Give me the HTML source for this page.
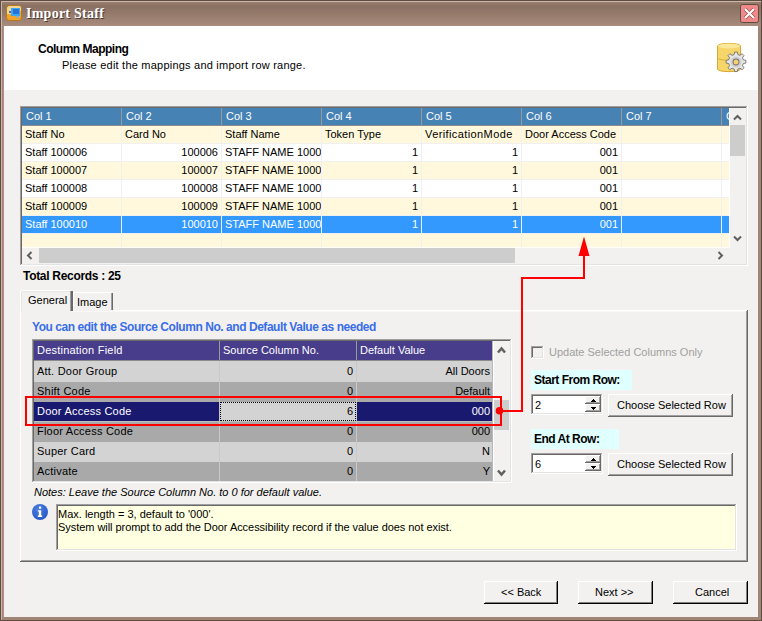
<!DOCTYPE html>
<html><head><meta charset="utf-8">
<style>
*{box-sizing:border-box;margin:0;padding:0}
html,body{width:762px;height:621px;overflow:hidden;background:#f2f1ef}
body{position:relative;font-family:"Liberation Sans",sans-serif;font-size:11px;color:#000}
.a{position:absolute}
.t{position:absolute;white-space:pre;line-height:13px}
.b{font-weight:bold}
.clip{position:absolute;overflow:hidden}
</style></head><body>
<div class="a" style="left:0px;top:0px;width:762px;height:621px;background:#a08476;"></div>
<div class="a" style="left:0px;top:0px;width:762px;height:26px;background:linear-gradient(#98806f 0px,#98806f 2px,#8a7062 6px,#a4887a 24px,#ae8c7e 26px);"></div>
<div class="a" style="left:0px;top:0px;width:1px;height:621px;background:#5e4b42;"></div>
<div class="a" style="left:761px;top:0px;width:1px;height:621px;background:#5e4b42;"></div>
<div class="a" style="left:0px;top:0px;width:762px;height:1px;background:#5e4b42;"></div>
<div class="a" style="left:0px;top:620px;width:762px;height:1px;background:#5e4b42;"></div>
<div class="a" style="left:1px;top:1px;width:1px;height:619px;background:#cdb5a8;"></div>
<div class="a" style="left:1px;top:1px;width:760px;height:1px;background:#cdb5a8;"></div>
<div class="a" style="left:3px;top:26px;width:1px;height:591px;background:#b88c88;"></div>
<svg class="a" style="left:6px;top:5px" width="16" height="16" viewBox="0 0 16 16">
<rect x="0.5" y="0.5" width="15" height="15" rx="3" fill="#f3a22a" stroke="#b87818"/>
<path d="M1 4 Q1 1 4 1 L12 1 Q15 1 15 3 L15 6 L8 9 L1 9 Z" fill="#eed79a"/>
<rect x="5" y="3" width="9" height="8" fill="#38a8f0"/>
<rect x="7" y="4" width="6" height="5" fill="#2a70d8"/>
<rect x="3" y="6" width="2" height="2" fill="#5a6a8a"/>
<rect x="10" y="11" width="3" height="2" fill="#8ab0c8"/>
</svg>
<div class="t" style="left:27px;top:7px;font-family:Liberation Serif;letter-spacing:0.25px;font-size:14px;line-height:16px;color:#4a3a32;font-weight:bold">Import Staff</div>
<div class="t" style="left:26px;top:6px;font-family:Liberation Serif;letter-spacing:0.25px;font-size:14px;line-height:16px;color:#fff;font-weight:bold">Import Staff</div>
<svg class="a" style="left:740px;top:4px" width="19" height="19" viewBox="0 0 19 19">
<rect x="0.5" y="0.5" width="18" height="18" rx="2" fill="#f08a8a" stroke="#5e4b42"/>
<path d="M5 5 L14 14 M14 5 L5 14" stroke="#a04848" stroke-width="3.6"/>
<path d="M5 5 L14 14 M14 5 L5 14" stroke="#fff" stroke-width="2.2"/>
</svg>
<div class="a" style="left:4px;top:26px;width:754px;height:591px;background:#f2f1ef;"></div>
<div class="a" style="left:4px;top:26px;width:754px;height:64px;background:#fff;"></div>
<div class="t" style="left:38px;top:43px;font-weight:bold;font-size:12px;letter-spacing:-0.5px">Column Mapping</div>
<div class="t" style="left:62px;top:59px;letter-spacing:0.22px">Please edit the mappings and import row range.</div>
<svg class="a" style="left:716px;top:42px" width="32" height="32" viewBox="0 0 32 32">
<path d="M1.5 4 C1.5 0.5 24.5 0.5 24.5 4 L24.5 27 C24.5 30.5 1.5 30.5 1.5 27 Z" fill="#f6d66a" stroke="#d8a830"/>
<path d="M1.5 16 C1.5 19 24.5 19 24.5 16" fill="none" stroke="#e0b040"/>
<ellipse cx="13" cy="4" rx="11" ry="2.6" fill="#fbe89a"/>
<g transform="translate(20,20)">
<path d="M-1.6 -10 L1.6 -10 L2.2 -7 L4.6 -6 L7.2 -8 L9.4 -5.8 L7.6 -3.2 L8.6 -0.8 L11.6 -0.2 L11.6 3 L8.6 3.6 L7.6 6 L9.4 8.6 L7.2 10.8 L4.6 9 L2.2 10 L1.6 13 L-1.6 13 L-2.2 10 L-4.6 9 L-7.2 10.8 L-9.4 8.6 L-7.6 6 L-8.6 3.6 L-11.6 3 L-11.6 -0.2 L-8.6 -0.8 L-7.6 -3.2 L-9.4 -5.8 L-7.2 -8 L-4.6 -6 L-2.2 -7 Z" transform="translate(0,-1.5) scale(0.85)" fill="#e6e6e6" stroke="#6a6a6a" stroke-width="1"/>
<circle cx="0" cy="0" r="5.5" fill="#d0d0d0"/>
<circle cx="0" cy="0" r="3.4" fill="#707070"/>
<circle cx="0" cy="0" r="2.5" fill="#f3d070"/>
</g>
</svg>
<div class="a" style="left:20px;top:106px;width:728px;height:1px;background:#a0a0a0;"></div>
<div class="a" style="left:20px;top:106px;width:1px;height:160px;background:#a0a0a0;"></div>
<div class="a" style="left:21px;top:107px;width:726px;height:1px;background:#696969;"></div>
<div class="a" style="left:21px;top:107px;width:1px;height:158px;background:#696969;"></div>
<div class="a" style="left:20px;top:265px;width:728px;height:1px;background:#ffffff;"></div>
<div class="a" style="left:747px;top:106px;width:1px;height:160px;background:#ffffff;"></div>
<div class="a" style="left:21px;top:264px;width:726px;height:1px;background:#e3e3e3;"></div>
<div class="a" style="left:746px;top:107px;width:1px;height:158px;background:#e3e3e3;"></div>
<div class="a" style="left:22px;top:108px;width:724px;height:156px;background:#f2f1ef;"></div>
<div class="a" style="left:22px;top:108px;width:707px;height:17px;background:#4682b4;"></div>
<div class="a" style="left:22px;top:125px;width:707px;height:1px;background:#8c8c8c;"></div>
<div class="clip" style="left:22px;top:108px;width:99px;height:17px"><div class="t" style="left:4px;top:2px;color:#fff">Col 1</div></div>
<div class="clip" style="left:122px;top:108px;width:99px;height:17px"><div class="t" style="left:4px;top:2px;color:#fff">Col 2</div></div>
<div class="clip" style="left:222px;top:108px;width:99px;height:17px"><div class="t" style="left:4px;top:2px;color:#fff">Col 3</div></div>
<div class="clip" style="left:322px;top:108px;width:99px;height:17px"><div class="t" style="left:4px;top:2px;color:#fff">Col 4</div></div>
<div class="clip" style="left:422px;top:108px;width:99px;height:17px"><div class="t" style="left:4px;top:2px;color:#fff">Col 5</div></div>
<div class="clip" style="left:522px;top:108px;width:99px;height:17px"><div class="t" style="left:4px;top:2px;color:#fff">Col 6</div></div>
<div class="clip" style="left:622px;top:108px;width:99px;height:17px"><div class="t" style="left:4px;top:2px;color:#fff">Col 7</div></div>
<div class="clip" style="left:722px;top:108px;width:7px;height:17px"><div class="t" style="left:4px;top:2px;color:#fff">Col 8</div></div>
<div class="a" style="left:22px;top:126px;width:707px;height:17px;background:#fff8dc;"></div>
<div class="a" style="left:22px;top:143px;width:707px;height:1px;background:#f0f0f0;"></div>
<div class="clip" style="left:22px;top:126px;width:99px;height:17px"><div class="t" style="left:3px;top:2px;color:#000;">Staff No</div></div>
<div class="clip" style="left:122px;top:126px;width:99px;height:17px"><div class="t" style="left:3px;top:2px;color:#000;">Card No</div></div>
<div class="clip" style="left:222px;top:126px;width:99px;height:17px"><div class="t" style="left:3px;top:2px;color:#000;">Staff Name</div></div>
<div class="clip" style="left:322px;top:126px;width:99px;height:17px"><div class="t" style="left:3px;top:2px;color:#000;">Token Type</div></div>
<div class="clip" style="left:422px;top:126px;width:99px;height:17px"><div class="t" style="left:3px;top:2px;color:#000;letter-spacing:0.4px;">VerificationMode</div></div>
<div class="clip" style="left:522px;top:126px;width:99px;height:17px"><div class="t" style="left:3px;top:2px;color:#000;">Door Access Code</div></div>
<div class="a" style="left:22px;top:144px;width:707px;height:17px;background:#ffffff;"></div>
<div class="a" style="left:22px;top:161px;width:707px;height:1px;background:#f0f0f0;"></div>
<div class="clip" style="left:22px;top:144px;width:99px;height:17px"><div class="t" style="left:3px;top:2px;color:#000;">Staff 100006</div></div>
<div class="t" style="right:544px;top:146px;color:#000">100006</div>
<div class="clip" style="left:222px;top:144px;width:99px;height:17px"><div class="t" style="left:3px;top:2px;color:#000;">STAFF NAME 100006</div></div>
<div class="t" style="right:344px;top:146px;color:#000">1</div>
<div class="t" style="right:244px;top:146px;color:#000">1</div>
<div class="t" style="right:144px;top:146px;color:#000">001</div>
<div class="a" style="left:22px;top:162px;width:707px;height:17px;background:#fff8dc;"></div>
<div class="a" style="left:22px;top:179px;width:707px;height:1px;background:#f0f0f0;"></div>
<div class="clip" style="left:22px;top:162px;width:99px;height:17px"><div class="t" style="left:3px;top:2px;color:#000;">Staff 100007</div></div>
<div class="t" style="right:544px;top:164px;color:#000">100007</div>
<div class="clip" style="left:222px;top:162px;width:99px;height:17px"><div class="t" style="left:3px;top:2px;color:#000;">STAFF NAME 100007</div></div>
<div class="t" style="right:344px;top:164px;color:#000">1</div>
<div class="t" style="right:244px;top:164px;color:#000">1</div>
<div class="t" style="right:144px;top:164px;color:#000">001</div>
<div class="a" style="left:22px;top:180px;width:707px;height:17px;background:#ffffff;"></div>
<div class="a" style="left:22px;top:197px;width:707px;height:1px;background:#f0f0f0;"></div>
<div class="clip" style="left:22px;top:180px;width:99px;height:17px"><div class="t" style="left:3px;top:2px;color:#000;">Staff 100008</div></div>
<div class="t" style="right:544px;top:182px;color:#000">100008</div>
<div class="clip" style="left:222px;top:180px;width:99px;height:17px"><div class="t" style="left:3px;top:2px;color:#000;">STAFF NAME 100008</div></div>
<div class="t" style="right:344px;top:182px;color:#000">1</div>
<div class="t" style="right:244px;top:182px;color:#000">1</div>
<div class="t" style="right:144px;top:182px;color:#000">001</div>
<div class="a" style="left:22px;top:198px;width:707px;height:17px;background:#fff8dc;"></div>
<div class="a" style="left:22px;top:215px;width:707px;height:1px;background:#f0f0f0;"></div>
<div class="clip" style="left:22px;top:198px;width:99px;height:17px"><div class="t" style="left:3px;top:2px;color:#000;">Staff 100009</div></div>
<div class="t" style="right:544px;top:200px;color:#000">100009</div>
<div class="clip" style="left:222px;top:198px;width:99px;height:17px"><div class="t" style="left:3px;top:2px;color:#000;">STAFF NAME 100009</div></div>
<div class="t" style="right:344px;top:200px;color:#000">1</div>
<div class="t" style="right:244px;top:200px;color:#000">1</div>
<div class="t" style="right:144px;top:200px;color:#000">001</div>
<div class="a" style="left:22px;top:216px;width:707px;height:17px;background:#3399ff;"></div>
<div class="a" style="left:22px;top:233px;width:707px;height:1px;background:#f0f0f0;"></div>
<div class="clip" style="left:22px;top:216px;width:99px;height:17px"><div class="t" style="left:3px;top:2px;color:#fff;">Staff 100010</div></div>
<div class="t" style="right:544px;top:218px;color:#fff">100010</div>
<div class="clip" style="left:222px;top:216px;width:99px;height:17px"><div class="t" style="left:3px;top:2px;color:#fff;">STAFF NAME 100010</div></div>
<div class="t" style="right:344px;top:218px;color:#fff">1</div>
<div class="t" style="right:244px;top:218px;color:#fff">1</div>
<div class="t" style="right:144px;top:218px;color:#fff">001</div>
<div class="a" style="left:22px;top:234px;width:707px;height:13px;background:#fff8dc;"></div>
<div class="a" style="left:121px;top:108px;width:1px;height:17px;background:#9a9a9a;"></div>
<div class="a" style="left:121px;top:126px;width:1px;height:121px;background:#f0f0f0;"></div>
<div class="a" style="left:221px;top:108px;width:1px;height:17px;background:#9a9a9a;"></div>
<div class="a" style="left:221px;top:126px;width:1px;height:121px;background:#f0f0f0;"></div>
<div class="a" style="left:321px;top:108px;width:1px;height:17px;background:#9a9a9a;"></div>
<div class="a" style="left:321px;top:126px;width:1px;height:121px;background:#f0f0f0;"></div>
<div class="a" style="left:421px;top:108px;width:1px;height:17px;background:#9a9a9a;"></div>
<div class="a" style="left:421px;top:126px;width:1px;height:121px;background:#f0f0f0;"></div>
<div class="a" style="left:521px;top:108px;width:1px;height:17px;background:#9a9a9a;"></div>
<div class="a" style="left:521px;top:126px;width:1px;height:121px;background:#f0f0f0;"></div>
<div class="a" style="left:621px;top:108px;width:1px;height:17px;background:#9a9a9a;"></div>
<div class="a" style="left:621px;top:126px;width:1px;height:121px;background:#f0f0f0;"></div>
<div class="a" style="left:721px;top:108px;width:1px;height:17px;background:#9a9a9a;"></div>
<div class="a" style="left:721px;top:126px;width:1px;height:121px;background:#f0f0f0;"></div>
<div class="a" style="left:729px;top:108px;width:17px;height:139px;background:#f2f1ef;"></div>
<div class="a" style="left:729px;top:108px;width:1px;height:139px;background:#ffffff;"></div>
<div class="a" style="left:730px;top:125px;width:15px;height:31px;background:#cdcdcd;"></div>
<svg class="a" style="left:733px;top:114px" width="9" height="7" viewBox="0 0 9 7"><path d="M1 5.5 L4.5 2 L8 5.5" fill="none" stroke="#606060" stroke-width="2"/></svg>
<svg class="a" style="left:733px;top:235px" width="9" height="7" viewBox="0 0 9 7"><path d="M1 1.5 L4.5 5 L8 1.5" fill="none" stroke="#606060" stroke-width="2"/></svg>
<div class="a" style="left:22px;top:247px;width:707px;height:17px;background:#f2f1ef;"></div>
<div class="a" style="left:22px;top:247px;width:707px;height:1px;background:#ffffff;"></div>
<div class="a" style="left:39px;top:248px;width:476px;height:15px;background:#cdcdcd;"></div>
<svg class="a" style="left:26px;top:251px" width="7" height="9" viewBox="0 0 7 9"><path d="M5.5 1 L2 4.5 L5.5 8" fill="none" stroke="#606060" stroke-width="2"/></svg>
<svg class="a" style="left:717px;top:251px" width="7" height="9" viewBox="0 0 7 9"><path d="M1.5 1 L5 4.5 L1.5 8" fill="none" stroke="#606060" stroke-width="2"/></svg>
<div class="t" style="left:23px;top:269px;font-weight:bold;font-size:12px;line-height:14px;letter-spacing:-0.3px">Total Records : 25</div>
<div class="a" style="left:20px;top:310px;width:728px;height:252px;background:#f2f1ef;"></div>
<div class="a" style="left:20px;top:310px;width:728px;height:1px;background:#ffffff;"></div>
<div class="a" style="left:20px;top:310px;width:1px;height:252px;background:#ffffff;"></div>
<div class="a" style="left:21px;top:311px;width:726px;height:1px;background:#f8f8f8;"></div>
<div class="a" style="left:747px;top:310px;width:1px;height:252px;background:#696969;"></div>
<div class="a" style="left:20px;top:561px;width:728px;height:1px;background:#696969;"></div>
<div class="a" style="left:746px;top:311px;width:1px;height:250px;background:#a0a0a0;"></div>
<div class="a" style="left:21px;top:560px;width:726px;height:1px;background:#a0a0a0;"></div>
<div class="a" style="left:73px;top:292px;width:40px;height:19px;background:#f2f1ef;"></div>
<div class="a" style="left:73px;top:292px;width:39px;height:1px;background:#ffffff;"></div>
<div class="a" style="left:73px;top:292px;width:1px;height:18px;background:#ffffff;"></div>
<div class="a" style="left:112px;top:293px;width:1px;height:17px;background:#696969;"></div>
<div class="a" style="left:111px;top:293px;width:1px;height:17px;background:#a0a0a0;"></div>
<div class="a" style="left:20px;top:290px;width:52px;height:22px;background:#f2f1ef;"></div>
<div class="a" style="left:21px;top:290px;width:49px;height:1px;background:#ffffff;"></div>
<div class="a" style="left:20px;top:291px;width:1px;height:21px;background:#ffffff;"></div>
<div class="a" style="left:22px;top:291px;width:48px;height:1px;background:#e6e6e6;"></div>
<div class="a" style="left:21px;top:292px;width:1px;height:19px;background:#e6e6e6;"></div>
<div class="a" style="left:71px;top:291px;width:2px;height:20px;background:#696969;"></div>
<div class="a" style="left:70px;top:291px;width:1px;height:20px;background:#a0a0a0;"></div>
<div class="t" style="left:28px;top:294px;">General</div>
<div class="t" style="left:77px;top:296px;">Image</div>
<div class="t" style="left:32px;top:321px;font-weight:bold;color:#3a6ee8;font-size:12px;letter-spacing:-0.45px">You can edit the Source Column No. and Default Value as needed</div>
<div class="a" style="left:32px;top:339px;width:480px;height:1px;background:#a0a0a0;"></div>
<div class="a" style="left:32px;top:339px;width:1px;height:144px;background:#a0a0a0;"></div>
<div class="a" style="left:33px;top:340px;width:478px;height:1px;background:#696969;"></div>
<div class="a" style="left:33px;top:340px;width:1px;height:142px;background:#696969;"></div>
<div class="a" style="left:32px;top:482px;width:480px;height:1px;background:#ffffff;"></div>
<div class="a" style="left:511px;top:339px;width:1px;height:144px;background:#ffffff;"></div>
<div class="a" style="left:33px;top:481px;width:478px;height:1px;background:#e3e3e3;"></div>
<div class="a" style="left:510px;top:340px;width:1px;height:142px;background:#e3e3e3;"></div>
<div class="a" style="left:34px;top:341px;width:476px;height:140px;background:#f2f1ef;"></div>
<div class="a" style="left:34px;top:341px;width:458px;height:19px;background:#483d8b;"></div>
<div class="a" style="left:34px;top:360px;width:458px;height:1px;background:#8c8c8c;"></div>
<div class="t" style="left:37px;top:344px;color:#fff;letter-spacing:0.22px">Destination Field</div>
<div class="t" style="left:223px;top:344px;color:#fff">Source Column No.</div>
<div class="t" style="left:360px;top:344px;color:#fff">Default Value</div>
<div class="a" style="left:34px;top:361px;width:458px;height:21px;background:#d3d3d3;"></div>
<div class="t" style="left:37px;top:365px;letter-spacing:0.22px">Att. Door Group</div>
<div class="t" style="right:409px;top:365px;">0</div>
<div class="t" style="right:272px;top:365px;">All Doors</div>
<div class="a" style="left:34px;top:382px;width:458px;height:20px;background:#a9a9a9;"></div>
<div class="t" style="left:37px;top:385px;letter-spacing:0.22px">Shift Code</div>
<div class="t" style="right:409px;top:385px;">0</div>
<div class="t" style="right:272px;top:385px;">Default</div>
<div class="a" style="left:34px;top:402px;width:458px;height:20px;background:#d3d3d3;"></div>
<div class="a" style="left:34px;top:402px;width:185px;height:19px;background:#191970;"></div>
<div class="a" style="left:220px;top:402px;width:136px;height:19px;background:#d3d3d3;"></div>
<div class="a" style="left:220px;top:402px;width:136px;height:19px;border:1px dotted #000"></div>
<div class="a" style="left:357px;top:402px;width:135px;height:19px;background:#191970;"></div>
<div class="a" style="left:34px;top:421px;width:458px;height:1px;background:#c0c0c0;"></div>
<div class="t" style="left:37px;top:405px;color:#fff;letter-spacing:0.22px">Door Access Code</div>
<div class="t" style="right:409px;top:405px;color:#000">6</div>
<div class="t" style="right:272px;top:405px;color:#fff">000</div>
<div class="a" style="left:34px;top:422px;width:458px;height:20px;background:#a9a9a9;"></div>
<div class="t" style="left:37px;top:425px;letter-spacing:0.22px">Floor Access Code</div>
<div class="t" style="right:409px;top:425px;">0</div>
<div class="t" style="right:272px;top:425px;">000</div>
<div class="a" style="left:34px;top:442px;width:458px;height:20px;background:#d3d3d3;"></div>
<div class="t" style="left:37px;top:445px;letter-spacing:0.22px">Super Card</div>
<div class="t" style="right:409px;top:445px;">0</div>
<div class="t" style="right:272px;top:445px;">N</div>
<div class="a" style="left:34px;top:462px;width:458px;height:19px;background:#a9a9a9;"></div>
<div class="t" style="left:37px;top:465px;letter-spacing:0.22px">Activate</div>
<div class="t" style="right:409px;top:465px;">0</div>
<div class="t" style="right:272px;top:465px;">Y</div>
<div class="a" style="left:219px;top:341px;width:1px;height:19px;background:#9a9a9a;"></div>
<div class="a" style="left:356px;top:341px;width:1px;height:19px;background:#9a9a9a;"></div>
<div class="a" style="left:219px;top:361px;width:1px;height:120px;background:#c8c8c8;"></div>
<div class="a" style="left:356px;top:361px;width:1px;height:120px;background:#c8c8c8;"></div>
<div class="a" style="left:492px;top:341px;width:1px;height:140px;background:#b8b8b8;"></div>
<div class="a" style="left:493px;top:341px;width:1px;height:140px;background:#ffffff;"></div>
<div class="a" style="left:494px;top:341px;width:16px;height:140px;background:#f2f1ef;"></div>
<div class="a" style="left:494px;top:400px;width:15px;height:30px;background:#cdcdcd;"></div>
<svg class="a" style="left:497px;top:346px" width="9" height="8" viewBox="0 0 9 8"><path d="M1 6.5 L4.5 2.5 L8 6.5" fill="none" stroke="#606060" stroke-width="2.5"/></svg>
<svg class="a" style="left:497px;top:469px" width="9" height="8" viewBox="0 0 9 8"><path d="M1 1.5 L4.5 5.5 L8 1.5" fill="none" stroke="#606060" stroke-width="2.5"/></svg>
<div class="t" style="left:34px;top:486px;font-style:italic">Notes: Leave the Source Column No. to 0 for default value.</div>
<svg class="a" style="left:31px;top:503px" width="18" height="18" viewBox="0 0 18 18">
<defs><radialGradient id="ig" cx="0.4" cy="0.3" r="0.8"><stop offset="0" stop-color="#4a80e0"/><stop offset="1" stop-color="#2454c4"/></radialGradient></defs>
<circle cx="9" cy="9" r="8" fill="url(#ig)"/>
<rect x="8" y="3.5" width="2.2" height="2.2" fill="#fff"/>
<path d="M6.8 7.2 H10.2 V12.6 H11.2 V14 H6.8 V12.6 H7.8 V8.6 H6.8 Z" fill="#fff"/>
</svg>
<div class="a" style="left:56px;top:504px;width:681px;height:1px;background:#a0a0a0;"></div>
<div class="a" style="left:56px;top:504px;width:1px;height:47px;background:#a0a0a0;"></div>
<div class="a" style="left:57px;top:505px;width:679px;height:1px;background:#696969;"></div>
<div class="a" style="left:57px;top:505px;width:1px;height:45px;background:#696969;"></div>
<div class="a" style="left:56px;top:550px;width:681px;height:1px;background:#ffffff;"></div>
<div class="a" style="left:736px;top:504px;width:1px;height:47px;background:#ffffff;"></div>
<div class="a" style="left:57px;top:549px;width:679px;height:1px;background:#e3e3e3;"></div>
<div class="a" style="left:735px;top:505px;width:1px;height:45px;background:#e3e3e3;"></div>
<div class="a" style="left:58px;top:506px;width:677px;height:43px;background:#ffffe1;"></div>
<div class="t" style="left:58px;top:508px;">Max. length = 3, default to '000'.</div>
<div class="t" style="left:58px;top:521px;letter-spacing:-0.05px">System will prompt to add the Door Accessibility record if the value does not exist.</div>
<div class="a" style="left:531px;top:346px;width:13px;height:1px;background:#a0a0a0;"></div>
<div class="a" style="left:531px;top:346px;width:1px;height:13px;background:#a0a0a0;"></div>
<div class="a" style="left:532px;top:347px;width:11px;height:1px;background:#696969;"></div>
<div class="a" style="left:532px;top:347px;width:1px;height:11px;background:#696969;"></div>
<div class="a" style="left:531px;top:358px;width:13px;height:1px;background:#ffffff;"></div>
<div class="a" style="left:543px;top:346px;width:1px;height:13px;background:#ffffff;"></div>
<div class="a" style="left:532px;top:357px;width:11px;height:1px;background:#e3e3e3;"></div>
<div class="a" style="left:542px;top:347px;width:1px;height:11px;background:#e3e3e3;"></div>
<div class="a" style="left:533px;top:348px;width:9px;height:9px;background:#f2f1ef;"></div>
<div class="t" style="left:549px;top:346px;color:#a0a0a0">Update Selected Columns Only</div>
<div class="a" style="left:531px;top:370px;width:101px;height:20px;background:#e0ffff;"></div>
<div class="t" style="left:534px;top:374px;font-weight:bold;font-size:12px;letter-spacing:-0.5px">Start From Row:</div>
<div class="a" style="left:531px;top:429px;width:88px;height:20px;background:#e0ffff;"></div>
<div class="t" style="left:534px;top:433px;font-weight:bold;font-size:12px;letter-spacing:-0.5px">End At Row:</div>
<div class="a" style="left:531px;top:394px;width:72px;height:1px;background:#a0a0a0;"></div>
<div class="a" style="left:531px;top:394px;width:1px;height:21px;background:#a0a0a0;"></div>
<div class="a" style="left:532px;top:395px;width:70px;height:1px;background:#696969;"></div>
<div class="a" style="left:532px;top:395px;width:1px;height:19px;background:#696969;"></div>
<div class="a" style="left:531px;top:414px;width:72px;height:1px;background:#ffffff;"></div>
<div class="a" style="left:602px;top:394px;width:1px;height:21px;background:#ffffff;"></div>
<div class="a" style="left:532px;top:413px;width:70px;height:1px;background:#e3e3e3;"></div>
<div class="a" style="left:601px;top:395px;width:1px;height:19px;background:#e3e3e3;"></div>
<div class="a" style="left:533px;top:396px;width:68px;height:17px;background:#fff;"></div>
<div class="t" style="left:535px;top:399px;">2</div>
<div class="a" style="left:585px;top:396px;width:16px;height:8px;background:#f2f1ef;"></div>
<div class="a" style="left:585px;top:396px;width:16px;height:1px;background:#ffffff;"></div>
<div class="a" style="left:585px;top:396px;width:1px;height:8px;background:#ffffff;"></div>
<div class="a" style="left:586px;top:397px;width:14px;height:1px;background:#f2f1ef;"></div>
<div class="a" style="left:586px;top:397px;width:1px;height:6px;background:#f2f1ef;"></div>
<div class="a" style="left:585px;top:403px;width:16px;height:1px;background:#696969;"></div>
<div class="a" style="left:600px;top:396px;width:1px;height:8px;background:#696969;"></div>
<div class="a" style="left:586px;top:402px;width:14px;height:1px;background:#a0a0a0;"></div>
<div class="a" style="left:599px;top:397px;width:1px;height:6px;background:#a0a0a0;"></div>
<div class="a" style="left:585px;top:404px;width:16px;height:8px;background:#f2f1ef;"></div>
<div class="a" style="left:585px;top:404px;width:16px;height:1px;background:#ffffff;"></div>
<div class="a" style="left:585px;top:404px;width:1px;height:8px;background:#ffffff;"></div>
<div class="a" style="left:586px;top:405px;width:14px;height:1px;background:#f2f1ef;"></div>
<div class="a" style="left:586px;top:405px;width:1px;height:6px;background:#f2f1ef;"></div>
<div class="a" style="left:585px;top:411px;width:16px;height:1px;background:#696969;"></div>
<div class="a" style="left:600px;top:404px;width:1px;height:8px;background:#696969;"></div>
<div class="a" style="left:586px;top:410px;width:14px;height:1px;background:#a0a0a0;"></div>
<div class="a" style="left:599px;top:405px;width:1px;height:6px;background:#a0a0a0;"></div>
<div class="a" style="left:593px;top:399px;width:1px;height:1px;background:#000;"></div>
<div class="a" style="left:592px;top:400px;width:3px;height:1px;background:#000;"></div>
<div class="a" style="left:591px;top:401px;width:5px;height:1px;background:#000;"></div>
<div class="a" style="left:591px;top:407px;width:5px;height:1px;background:#000;"></div>
<div class="a" style="left:592px;top:408px;width:3px;height:1px;background:#000;"></div>
<div class="a" style="left:593px;top:409px;width:1px;height:1px;background:#000;"></div>
<div class="a" style="left:531px;top:453px;width:72px;height:1px;background:#a0a0a0;"></div>
<div class="a" style="left:531px;top:453px;width:1px;height:21px;background:#a0a0a0;"></div>
<div class="a" style="left:532px;top:454px;width:70px;height:1px;background:#696969;"></div>
<div class="a" style="left:532px;top:454px;width:1px;height:19px;background:#696969;"></div>
<div class="a" style="left:531px;top:473px;width:72px;height:1px;background:#ffffff;"></div>
<div class="a" style="left:602px;top:453px;width:1px;height:21px;background:#ffffff;"></div>
<div class="a" style="left:532px;top:472px;width:70px;height:1px;background:#e3e3e3;"></div>
<div class="a" style="left:601px;top:454px;width:1px;height:19px;background:#e3e3e3;"></div>
<div class="a" style="left:533px;top:455px;width:68px;height:17px;background:#fff;"></div>
<div class="t" style="left:535px;top:458px;">6</div>
<div class="a" style="left:585px;top:455px;width:16px;height:8px;background:#f2f1ef;"></div>
<div class="a" style="left:585px;top:455px;width:16px;height:1px;background:#ffffff;"></div>
<div class="a" style="left:585px;top:455px;width:1px;height:8px;background:#ffffff;"></div>
<div class="a" style="left:586px;top:456px;width:14px;height:1px;background:#f2f1ef;"></div>
<div class="a" style="left:586px;top:456px;width:1px;height:6px;background:#f2f1ef;"></div>
<div class="a" style="left:585px;top:462px;width:16px;height:1px;background:#696969;"></div>
<div class="a" style="left:600px;top:455px;width:1px;height:8px;background:#696969;"></div>
<div class="a" style="left:586px;top:461px;width:14px;height:1px;background:#a0a0a0;"></div>
<div class="a" style="left:599px;top:456px;width:1px;height:6px;background:#a0a0a0;"></div>
<div class="a" style="left:585px;top:463px;width:16px;height:8px;background:#f2f1ef;"></div>
<div class="a" style="left:585px;top:463px;width:16px;height:1px;background:#ffffff;"></div>
<div class="a" style="left:585px;top:463px;width:1px;height:8px;background:#ffffff;"></div>
<div class="a" style="left:586px;top:464px;width:14px;height:1px;background:#f2f1ef;"></div>
<div class="a" style="left:586px;top:464px;width:1px;height:6px;background:#f2f1ef;"></div>
<div class="a" style="left:585px;top:470px;width:16px;height:1px;background:#696969;"></div>
<div class="a" style="left:600px;top:463px;width:1px;height:8px;background:#696969;"></div>
<div class="a" style="left:586px;top:469px;width:14px;height:1px;background:#a0a0a0;"></div>
<div class="a" style="left:599px;top:464px;width:1px;height:6px;background:#a0a0a0;"></div>
<div class="a" style="left:593px;top:458px;width:1px;height:1px;background:#000;"></div>
<div class="a" style="left:592px;top:459px;width:3px;height:1px;background:#000;"></div>
<div class="a" style="left:591px;top:460px;width:5px;height:1px;background:#000;"></div>
<div class="a" style="left:591px;top:466px;width:5px;height:1px;background:#000;"></div>
<div class="a" style="left:592px;top:467px;width:3px;height:1px;background:#000;"></div>
<div class="a" style="left:593px;top:468px;width:1px;height:1px;background:#000;"></div>
<div class="a" style="left:608px;top:394px;width:125px;height:23px;background:#f2f1ef;"></div>
<div class="a" style="left:608px;top:394px;width:125px;height:1px;background:#ffffff;"></div>
<div class="a" style="left:608px;top:394px;width:1px;height:23px;background:#ffffff;"></div>
<div class="a" style="left:609px;top:395px;width:123px;height:1px;background:#f2f1ef;"></div>
<div class="a" style="left:609px;top:395px;width:1px;height:21px;background:#f2f1ef;"></div>
<div class="a" style="left:608px;top:416px;width:125px;height:1px;background:#696969;"></div>
<div class="a" style="left:732px;top:394px;width:1px;height:23px;background:#696969;"></div>
<div class="a" style="left:609px;top:415px;width:123px;height:1px;background:#a0a0a0;"></div>
<div class="a" style="left:731px;top:395px;width:1px;height:21px;background:#a0a0a0;"></div>
<div class="t" style="left:617px;top:399px;">Choose Selected Row</div>
<div class="a" style="left:608px;top:453px;width:125px;height:23px;background:#f2f1ef;"></div>
<div class="a" style="left:608px;top:453px;width:125px;height:1px;background:#ffffff;"></div>
<div class="a" style="left:608px;top:453px;width:1px;height:23px;background:#ffffff;"></div>
<div class="a" style="left:609px;top:454px;width:123px;height:1px;background:#f2f1ef;"></div>
<div class="a" style="left:609px;top:454px;width:1px;height:21px;background:#f2f1ef;"></div>
<div class="a" style="left:608px;top:475px;width:125px;height:1px;background:#696969;"></div>
<div class="a" style="left:732px;top:453px;width:1px;height:23px;background:#696969;"></div>
<div class="a" style="left:609px;top:474px;width:123px;height:1px;background:#a0a0a0;"></div>
<div class="a" style="left:731px;top:454px;width:1px;height:21px;background:#a0a0a0;"></div>
<div class="t" style="left:617px;top:458px;">Choose Selected Row</div>
<div class="a" style="left:484px;top:581px;width:74px;height:23px;background:#f2f1ef;"></div>
<div class="a" style="left:484px;top:581px;width:74px;height:1px;background:#ffffff;"></div>
<div class="a" style="left:484px;top:581px;width:1px;height:23px;background:#ffffff;"></div>
<div class="a" style="left:485px;top:582px;width:72px;height:1px;background:#f2f1ef;"></div>
<div class="a" style="left:485px;top:582px;width:1px;height:21px;background:#f2f1ef;"></div>
<div class="a" style="left:484px;top:603px;width:74px;height:1px;background:#000000;"></div>
<div class="a" style="left:557px;top:581px;width:1px;height:23px;background:#000000;"></div>
<div class="a" style="left:485px;top:602px;width:72px;height:1px;background:#808080;"></div>
<div class="a" style="left:556px;top:582px;width:1px;height:21px;background:#808080;"></div>
<div class="t" style="left:501px;top:586px;">&lt;&lt; Back</div>
<div class="a" style="left:578px;top:581px;width:75px;height:23px;background:#f2f1ef;"></div>
<div class="a" style="left:578px;top:581px;width:75px;height:1px;background:#ffffff;"></div>
<div class="a" style="left:578px;top:581px;width:1px;height:23px;background:#ffffff;"></div>
<div class="a" style="left:579px;top:582px;width:73px;height:1px;background:#f2f1ef;"></div>
<div class="a" style="left:579px;top:582px;width:1px;height:21px;background:#f2f1ef;"></div>
<div class="a" style="left:578px;top:603px;width:75px;height:1px;background:#000000;"></div>
<div class="a" style="left:652px;top:581px;width:1px;height:23px;background:#000000;"></div>
<div class="a" style="left:579px;top:602px;width:73px;height:1px;background:#808080;"></div>
<div class="a" style="left:651px;top:582px;width:1px;height:21px;background:#808080;"></div>
<div class="t" style="left:595px;top:586px;">Next &gt;&gt;</div>
<div class="a" style="left:673px;top:581px;width:75px;height:23px;background:#f2f1ef;"></div>
<div class="a" style="left:673px;top:581px;width:75px;height:1px;background:#ffffff;"></div>
<div class="a" style="left:673px;top:581px;width:1px;height:23px;background:#ffffff;"></div>
<div class="a" style="left:674px;top:582px;width:73px;height:1px;background:#f2f1ef;"></div>
<div class="a" style="left:674px;top:582px;width:1px;height:21px;background:#f2f1ef;"></div>
<div class="a" style="left:673px;top:603px;width:75px;height:1px;background:#000000;"></div>
<div class="a" style="left:747px;top:581px;width:1px;height:23px;background:#000000;"></div>
<div class="a" style="left:674px;top:602px;width:73px;height:1px;background:#808080;"></div>
<div class="a" style="left:746px;top:582px;width:1px;height:21px;background:#808080;"></div>
<div class="t" style="left:695px;top:586px;">Cancel</div>
<div class="a" style="left:25px;top:396px;width:477px;height:2px;background:#ff0000;"></div>
<div class="a" style="left:25px;top:424px;width:477px;height:2px;background:#ff0000;"></div>
<div class="a" style="left:25px;top:396px;width:2px;height:30px;background:#ff0000;"></div>
<div class="a" style="left:500px;top:396px;width:2px;height:30px;background:#ff0000;"></div>
<svg class="a" style="left:494px;top:405px" width="12" height="12" viewBox="0 0 12 12"><circle cx="5.5" cy="5.8" r="3.8" fill="#ff0000"/></svg>
<div class="a" style="left:500px;top:410px;width:22px;height:2px;background:#ff0000;"></div>
<div class="a" style="left:521px;top:277px;width:2px;height:135px;background:#ff0000;"></div>
<div class="a" style="left:521px;top:277px;width:64px;height:2px;background:#ff0000;"></div>
<div class="a" style="left:583px;top:254px;width:2px;height:25px;background:#ff0000;"></div>
<svg class="a" style="left:576px;top:235px" width="16" height="22" viewBox="0 0 16 22"><path d="M8 1.5 L13.5 21 L2.5 21 Z" fill="#ff0000"/></svg>
</body></html>
